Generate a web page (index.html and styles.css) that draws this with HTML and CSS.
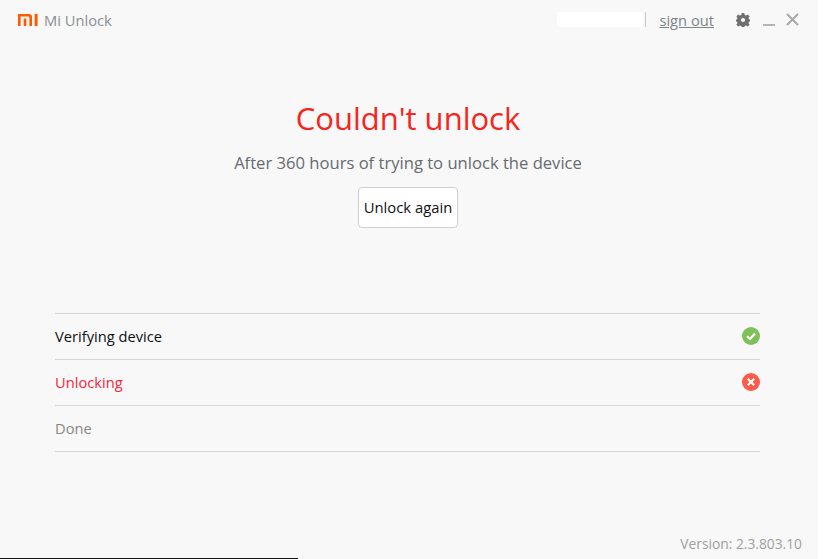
FILE: index.html
```html
<!DOCTYPE html>
<html lang="en">
<head>
  <meta charset="UTF-8" />
  <title>Mi Unlock</title>
  <link rel="stylesheet" href="styles.css">
</head>
<body>
  <div class="window">
    <div class="titlebar">
      <div class="brand">
        <svg class="logo" width="20" height="12" viewBox="0 0 20 12">
          <path d="M0 0H11Q14 0 14 3V12H11.4V3.6Q11.4 2.4 10.2 2.4H2.6V12H0ZM5.7 4.6H8.3V12H5.7ZM16.6 0H19.6V12H16.6Z" fill="#ff5a00"/>
        </svg>
        <span class="app-name">Mi Unlock</span>
      </div>
      <div class="account">
        <div class="user-mask"></div>
        <div class="divider"></div>
        <a class="sign-out">sign out</a>
        <svg class="gear" width="14" height="14" viewBox="0 0 14 14">
          <path fill="#6f6f6f" fill-rule="evenodd" d="M5.7 0H8.3L8.7 1.9 10.1 2.5 11.8 1.5 13.6 3.3 12.5 5 13.1 6.3 14 6.7V8.3L13.1 8.7 12.5 10 13.6 11.7 11.8 13.5 10.1 12.5 8.7 13.1 8.3 14H5.7L5.3 13.1 3.9 12.5 2.2 13.5 .4 11.7 1.5 10 .9 8.7 0 8.3V6.7L.9 6.3 1.5 5 .4 3.3 2.2 1.5 3.9 2.5 5.3 1.9ZM7 4.9A2.1 2.1 0 1 0 7 9.1 2.1 2.1 0 1 0 7 4.9Z"/>
        </svg>
        <div class="minimize"></div>
        <svg class="close" width="13" height="13" viewBox="0 0 13 13">
          <path d="M1 1L12 12M12 1L1 12" stroke="#a9a9a9" stroke-width="2"/>
        </svg>
      </div>
    </div>

    <div class="result">
      <h1>Couldn't unlock</h1>
      <p>After 360 hours of trying to unlock the device</p>
      <button class="retry">Unlock again</button>
    </div>

    <ul class="steps">
      <li class="step step-ok">
        <span>Verifying device</span>
        <svg width="18" height="18" viewBox="0 0 18 18">
          <circle cx="9" cy="9" r="9" fill="#7fc05a"/>
          <path d="M5 9.2L8 12 13 6.6" fill="none" stroke="#fff" stroke-width="2.2"/>
        </svg>
      </li>
      <li class="step step-failed">
        <span>Unlocking</span>
        <svg width="18" height="18" viewBox="0 0 18 18">
          <circle cx="9" cy="9" r="9" fill="#ff5a47"/>
          <path d="M5.8 5.8L12.2 12.2M12.2 5.8L5.8 12.2" stroke="#fff" stroke-width="2.2"/>
        </svg>
      </li>
      <li class="step step-todo">
        <span>Done</span>
      </li>
    </ul>

    <div class="version">Version: 2.3.803.10</div>
    <div class="taskbar-edge"></div>
  </div>
</body>
</html>
```

FILE: styles.css
```css
html, body {
  margin: 0;
  background: #fff;
}
.window {
  position: relative;
  box-sizing: border-box;
  width: 818px;
  height: 559px;
  background: #f8f8f8;
  font-family: 'Open Sans', 'Noto Sans', sans-serif;
  display: flex;
  flex-direction: column;
}
.titlebar {
  height: 39px;
  display: flex;
  align-items: center;
  justify-content: space-between;
  padding: 0 19px 0 18px;
}
.brand {
  display: flex;
  align-items: center;
  gap: 6px;
}
.app-name {
  font-size: 14.7px;
  color: #8a8f94;
}
.account {
  display: flex;
  align-items: center;
}
.user-mask {
  width: 86px;
  height: 15px;
  background: #fff;
  border-radius: 2px;
}
.divider {
  width: 1px;
  height: 15px;
  margin-left: 2px;
  background: #c8c8c8;
}
.sign-out {
  margin-left: 13px;
  font-size: 14.7px;
  color: #7d8388;
  text-decoration: underline;
}
.gear {
  margin-left: 22px;
}
.minimize {
  width: 12px;
  height: 2px;
  margin: 10px 0 0 13px;
  background: #b4b4b4;
}
.close {
  margin-left: 11px;
}
.result {
  text-align: center;
  padding: 58px 2px 0 0;
}
h1 {
  margin: 0;
  font-size: 31px;
  line-height: 42px;
  font-weight: 400;
  color: #f5261c;
}
.result p {
  margin: 12px 0 0;
  font-size: 16.6px;
  line-height: 24px;
  color: #666b70;
}
.retry {
  display: block;
  box-sizing: border-box;
  width: 100px;
  height: 41px;
  margin: 12px auto 0;
  padding: 0 0 2px;
  font: inherit;
  font-size: 14.8px;
  color: #111;
  background: #fff;
  border: 1px solid #cfcfcf;
  border-radius: 4px;
}
.steps {
  list-style: none;
  margin: 85px 0 0 55px;
  padding: 0;
  width: 705px;
  border-top: 1px solid #d6d6d6;
}
.step {
  box-sizing: border-box;
  height: 46px;
  padding-bottom: 2px;
  display: flex;
  align-items: center;
  justify-content: space-between;
  font-size: 14.7px;
  border-bottom: 1px solid #d6d6d6;
}
.step-ok { color: #111; }
.step-failed { color: #f5263c; }
.step-todo { color: #8b8780; }
.version {
  margin-top: auto;
  padding: 0 16px 5px 0;
  text-align: right;
  font-size: 13.8px;
  line-height: 20px;
  color: #a0a0a0;
}
.taskbar-edge {
  position: absolute;
  left: 0;
  bottom: 0;
  width: 298px;
  height: 1px;
  background: #111;
}
```
